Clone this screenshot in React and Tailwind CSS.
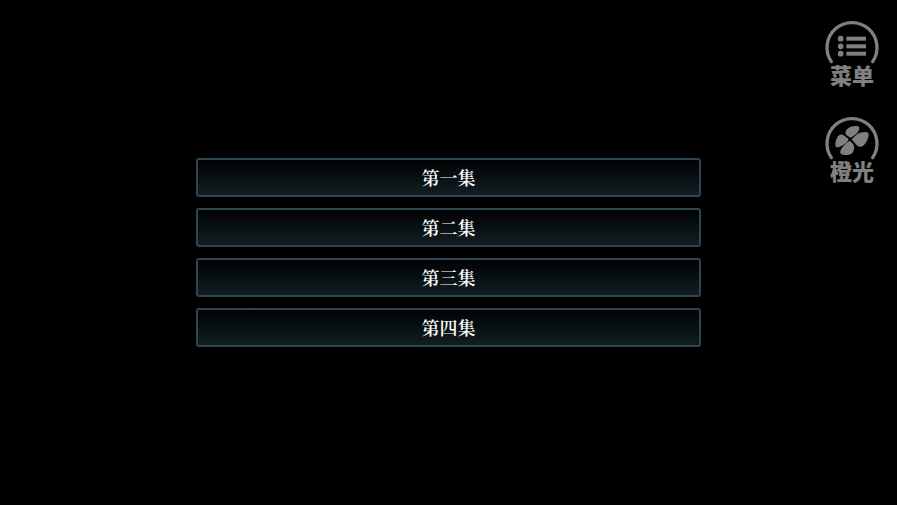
import { useState } from 'react'

const episodes = ['第一集', '第二集', '第三集', '第四集']

function Arc() {
  return (
    <path
      d="M50 150 A75 75 0 1 1 174 150"
      fill="none"
      stroke="currentColor"
      strokeWidth="10"
      strokeLinecap="round"
    />
  )
}

function MenuIcon() {
  return (
    <svg viewBox="31 28 162 126" className="h-[42px] w-[54px] overflow-visible" aria-hidden="true">
      <Arc />
      <g fill="currentColor">
        <circle cx="78" cy="81" r="8.5" />
        <circle cx="78" cy="104" r="8.5" />
        <circle cx="78" cy="126" r="8.5" />
        <rect x="95" y="75" width="59" height="12" />
        <rect x="95" y="98" width="59" height="12" />
        <rect x="95" y="120" width="59" height="12" />
      </g>
    </svg>
  )
}

function CloverIcon() {
  return (
    <svg viewBox="31 28 162 126" className="h-[42px] w-[54px] overflow-visible" aria-hidden="true">
      <Arc />
      <g fill="currentColor">
        <path d="M107 90 L95 82 C91 79 92 73 95 68 C100 59 112 55 125 55 C133 55 136 59 133 66 C130 75 122 83 107 90 Z" />
        <path d="M102 94 L89 84 C82 79 74 80 70 86 C65 93 62 103 62 111 C62 119 67 121 75 117 C85 113 93 108 98 102 Z" />
        <path d="M111 95 L127 80 C133 75 143 73 153 73 C161 73 164 78 161 88 C158 99 151 112 143 116 C136 119 129 116 125 111 Z" />
        <path d="M105 99 L115 109 C120 115 120 124 115 133 C111 141 103 142 90 142 C78 142 75 137 78 128 C81 118 90 110 105 99 Z" />
      </g>
    </svg>
  )
}

function SideButton({ icon, label }) {
  return (
    <button type="button" className="flex flex-col items-center text-[#808080] hover:text-white">
      {icon}
      <span className="text-[22px] leading-[22px] font-black">{label}</span>
    </button>
  )
}

export default function App() {
  const [selected, setSelected] = useState(null)

  return (
    <div className="grid min-h-screen grid-cols-[1fr_56.2%_1fr] bg-black font-['Noto_Sans_CJK_SC',sans-serif]">
      <main className="col-start-2 flex flex-col justify-center gap-[11px]">
        {episodes.map((title) => (
          <button
            key={title}
            type="button"
            aria-pressed={selected === title}
            onClick={() => setSelected(title)}
            className="h-[39px] rounded-[3px] border-2 border-[#2e4652] bg-linear-to-b from-[#020405] to-[#131e24] pb-0.5 font-['Noto_Serif_CJK_SC','Noto_Sans_CJK_SC',serif] text-lg leading-6 font-semibold text-white"
          >
            {title}
          </button>
        ))}
      </main>
      <nav className="flex flex-col items-end gap-8 pt-[21px] pr-[18px]">
        <SideButton icon={<MenuIcon />} label="菜单" />
        <SideButton icon={<CloverIcon />} label="橙光" />
      </nav>
    </div>
  )
}
